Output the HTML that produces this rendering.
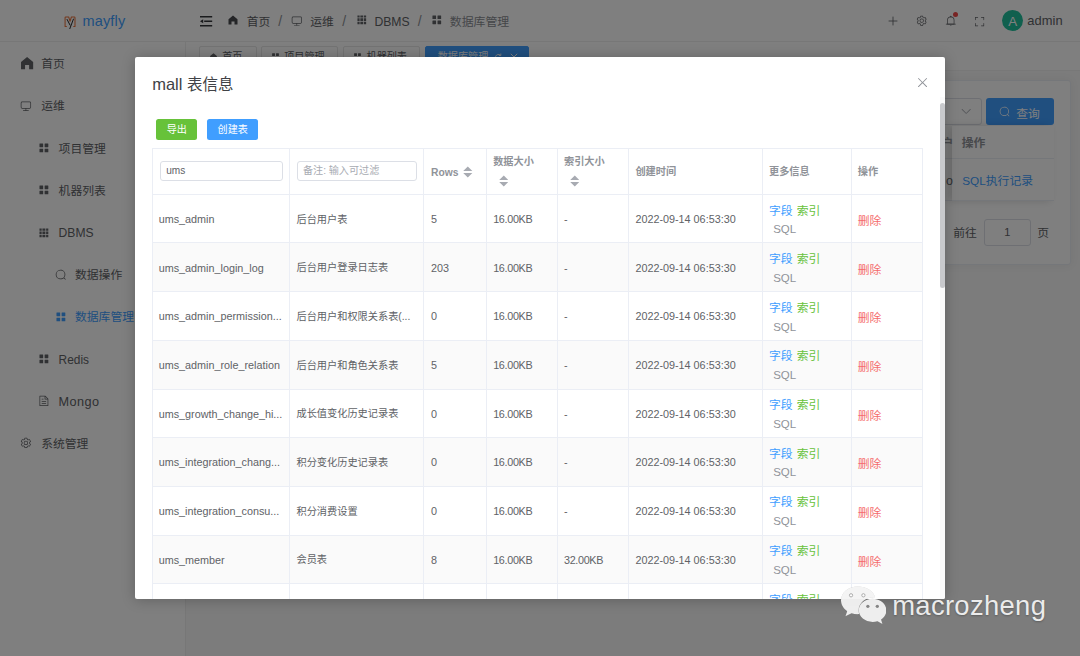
<!DOCTYPE html>
<html lang="zh-CN">
<head>
<meta charset="utf-8">
<title>mayfly - 数据库管理</title>
<style>
*{box-sizing:border-box;margin:0;padding:0}
html,body{width:1080px;height:656px;overflow:hidden;background:#f8f8f8}
body{font-family:"Liberation Sans","Noto Sans CJK SC",sans-serif;color:#303133;-webkit-font-smoothing:antialiased}
#app{position:relative;width:1080px;height:656px;overflow:hidden;background:#f8f8f8}
.abs{position:absolute}
svg{display:block}
/* ---------- header ---------- */
.header{position:absolute;left:0;top:0;width:1080px;height:42.2px;background:#fff;border-bottom:1px solid #eeeeee}
.logo{position:absolute;left:0;top:0;width:185.6px;height:42.2px}
.logo .txt{position:absolute;left:82.4px;top:11.7px;font-size:14.5px;letter-spacing:.18px;line-height:19px;color:#409eff}
.bc{position:absolute;top:0;height:42.2px;line-height:45.2px;font-size:11.8px;color:#606266;white-space:nowrap}
.bc.sep{color:#8d9095;font-size:14px;line-height:43.6px}
.bc.last{color:#8a8d93}
.hic{position:absolute}
.avatar{position:absolute;left:1002.1px;top:10px;width:21.2px;height:21.2px;border-radius:50%;background:#20c09c;color:#fff;font-size:13.4px;line-height:23.6px;text-align:center}
.uname{position:absolute;left:1027.2px;top:0;height:42.2px;line-height:42.6px;font-size:12.9px;letter-spacing:.12px;color:#606266}
/* ---------- sidebar ---------- */
.side{position:absolute;left:0;top:42.2px;width:185.6px;height:614px;background:#fff;border-right:1px solid #eeeeee}
.mi{position:absolute;left:0;width:185.6px;height:42.2px;line-height:45px;font-size:11.8px;color:#606266;white-space:nowrap}
.mi svg{position:absolute;top:50%}
.mi span{position:absolute;top:0}
.mi.act{color:#409eff}
/* ---------- tags ---------- */
.tags{position:absolute;left:186.4px;top:42.2px;width:894px;height:29px;background:#fff;border-bottom:1px solid #f0f0f0}
.tag{position:absolute;top:3.8px;height:22px;border:1px solid #e6e6e6;border-radius:2px;background:#fff;font-size:10.1px;line-height:20px;color:#606266;white-space:nowrap}
.tag.on{background:#409eff;border-color:#409eff;color:#fff}
/* ---------- card behind ---------- */
.card{position:absolute;left:195px;top:80.4px;width:876.3px;height:184.4px;background:#fff;border:1px solid #ebeef5;border-radius:3px;box-shadow:0 0 10px rgba(0,0,0,.06)}
/* ---------- overlay & modal ---------- */
.overlay{position:absolute;left:0;top:0;width:1080px;height:656px;background:rgba(0,0,0,.5)}
.modal{position:absolute;left:135px;top:56.8px;width:810.2px;height:542.2px;background:#fff;border-radius:2px;box-shadow:0 1px 14px rgba(0,0,0,.24);overflow:hidden}
.m{position:absolute;left:-135px;top:-56.8px;width:1080px;height:656px}
.title{position:absolute;left:152.2px;top:72.1px;font-size:15.5px;line-height:24px;color:#404246;white-space:nowrap}
.btn{position:absolute;top:119.4px;height:20.2px;border-radius:2.5px;color:#fff;font-size:10.1px;line-height:21.6px;text-align:center;white-space:nowrap}
.thumb{position:absolute;left:940.1px;top:102.8px;width:5.1px;height:185px;border-radius:3px;background:#c8c9cc}
/* table */
.tb{position:absolute;left:152.7px;top:148.2px;width:770px;height:460px;border-left:1px solid #ebeef5;border-top:1px solid #ebeef5}
.row{position:absolute;left:152.7px;width:770px;border-bottom:1px solid #ebeef5}
.row.s{background:#fafafa}
.vl{position:absolute;top:148.2px;width:1px;height:460px;background:#ebeef5}
.c{position:absolute;white-space:nowrap;font-size:10.8px;color:#606266;line-height:14px}
.c.zh{font-size:10.2px}
.th{position:absolute;white-space:nowrap;font-size:10.2px;font-weight:bold;color:#909399;line-height:14px}
.lk{position:absolute;white-space:nowrap;font-size:11.8px;line-height:16px}
.inp{position:absolute;top:161px;height:19.8px;border:1px solid #dcdfe6;border-radius:3px;background:#fff;font-size:10.1px;line-height:18.6px;color:#606266;padding-left:6px;white-space:nowrap}
/* watermark */
.wm{position:absolute;left:892.2px;top:585.5px;letter-spacing:.33px;font-family:"Liberation Sans","Noto Sans CJK SC",sans-serif;font-size:27.4px;line-height:40px;color:rgba(255,255,255,.88);white-space:nowrap;text-shadow:0 1px 2px rgba(0,0,0,.25)}
</style>
</head>
<body>
<div id="app">

<!-- HEADER -->
<div class="header">
  <div class="logo">
    <svg class="abs" style="left:64px;top:15.8px" width="12.4" height="14" viewBox="0 0 12.4 14"><path d="M2.800 10.500H1.080V1.700Q1.080 1 1.800 1H4.700L6.040 5.300 7.400 1H10.300Q11 1 11 1.700V10.500H9.300" fill="none" stroke="#e6713a" stroke-width="1.050" stroke-linejoin="round"/><path d="M2.900 3.100 6.200 9.400M9.600 2.700 5.700 13" fill="none" stroke="#26282b" stroke-width="1"/></svg>
    <div class="txt">mayfly</div>
  </div>
  <!-- fold icon -->
  <svg class="hic" style="left:200.4px;top:15.7px" width="12.2" height="11" viewBox="0 0 12.2 11"><path d="M0 .8h12.200M4.200 5.300h8M0 9.800h12.200" stroke="#34363a" stroke-width="1.600" fill="none"/><path d="M3.200 3.300 0 5.300 3.200 7.300z" fill="#34363a"/></svg>
  <!-- home -->
  <svg class="hic" style="left:227.2px;top:14.3px" width="12" height="12" viewBox="0 0 1024 1024"><path fill="#484a4e" d="M512 128 128 447.936V896h255.936V640H640v256h255.936V447.936z"/></svg>
  <div class="bc" style="left:246.8px">首页</div>
  <div class="bc sep" style="left:278.3px">/</div>
  <svg class="hic" style="left:291.4px;top:15.2px" width="11.6" height="11.6" viewBox="0 0 1024 1024"><path fill="#606266" d="M544 768v128h192a32 32 0 1 1 0 64H288a32 32 0 1 1 0-64h192V768H192A128 128 0 0 1 64 640V256a128 128 0 0 1 128-128h640a128 128 0 0 1 128 128v384a128 128 0 0 1-128 128zM192 192a64 64 0 0 0-64 64v384a64 64 0 0 0 64 64h640a64 64 0 0 0 64-64V256a64 64 0 0 0-64-64z"/></svg>
  <div class="bc" style="left:310.2px">运维</div>
  <div class="bc sep" style="left:342.3px">/</div>
  <svg class="hic" style="left:355.8px;top:14px" width="11.6" height="11.6" viewBox="0 0 1024 1024"><path fill="#606266" d="M640 384v256H384V384zm64 0h192v256H704zm-64 512H384V704h256zm64 0V704h192v192zm-64-768v192H384V128zm64 0h192v192H704zM320 384v256H128V384zm0 512H128V704h192zm0-768v192H128V128z"/></svg>
  <div class="bc" style="left:374.4px;font-size:12.2px">DBMS</div>
  <div class="bc sep" style="left:417.7px">/</div>
  <svg class="hic" style="left:430.6px;top:14px" width="11.6" height="11.6" viewBox="0 0 1024 1024"><path fill="#606266" d="M160 448a32 32 0 0 1-32-32V160.064a32 32 0 0 1 32-32h256a32 32 0 0 1 32 32V416a32 32 0 0 1-32 32zm448 0a32 32 0 0 1-32-32V160.064a32 32 0 0 1 32-32h255.936a32 32 0 0 1 32 32V416a32 32 0 0 1-32 32zM160 896a32 32 0 0 1-32-32V608a32 32 0 0 1 32-32h256a32 32 0 0 1 32 32v256a32 32 0 0 1-32 32zm448 0a32 32 0 0 1-32-32V608a32 32 0 0 1 32-32h255.936a32 32 0 0 1 32 32v256a32 32 0 0 1-32 32z"/></svg>
  <div class="bc last" style="left:449.8px;font-size:11.9px">数据库管理</div>

  <!-- right icons -->
  <svg class="hic" style="left:887.6px;top:16px" width="10" height="10" viewBox="0 0 10 10"><path d="M5 .6v8.8M.6 5h8.8" stroke="#606266" stroke-width=".85" fill="none"/></svg>
  <svg class="hic" style="left:915.8px;top:15.4px" width="11.4" height="11.4" viewBox="0 0 1024 1024"><path fill="#606266" d="M600.704 64a32 32 0 0 1 30.464 22.208l35.2 109.376c14.784 7.232 28.928 15.36 42.432 24.512l112.384-24.192a32 32 0 0 1 34.432 15.36L944.32 364.8a32 32 0 0 1-4.032 37.504l-77.12 85.12a357.12 357.12 0 0 1 0 49.024l77.12 85.248a32 32 0 0 1 4.032 37.504l-88.704 153.6a32 32 0 0 1-34.432 15.296L708.8 803.904c-13.44 9.088-27.648 17.28-42.368 24.512l-35.264 109.376A32 32 0 0 1 600.704 960H423.296a32 32 0 0 1-30.464-22.208L357.696 828.48a351.616 351.616 0 0 1-42.56-24.64l-112.32 24.256a32 32 0 0 1-34.432-15.36L79.68 659.2a32 32 0 0 1 4.032-37.504l77.12-85.248a357.12 357.12 0 0 1 0-48.896l-77.12-85.248A32 32 0 0 1 79.68 364.8l88.704-153.6a32 32 0 0 1 34.432-15.296l112.32 24.256c13.568-9.152 27.776-17.408 42.56-24.64l35.2-109.312A32 32 0 0 1 423.232 64H600.64zm-23.424 64H446.72l-36.352 113.088-24.512 11.968a294.113 294.113 0 0 0-34.816 20.096l-22.656 15.36-116.224-25.088-65.28 113.152 79.68 88.192-1.92 27.136a293.12 293.12 0 0 0 0 40.192l1.92 27.136-79.808 88.192 65.344 113.152 116.224-25.024 22.656 15.296a294.113 294.113 0 0 0 34.816 20.096l24.512 11.968L446.72 896h130.688l36.48-113.152 24.448-11.904a288.282 288.282 0 0 0 34.752-20.096l22.592-15.296 116.288 25.024 65.28-113.152-79.744-88.192 1.92-27.136a293.12 293.12 0 0 0 0-40.256l-1.92-27.136 79.808-88.128-65.344-113.152-116.288 24.96-22.592-15.232a287.616 287.616 0 0 0-34.752-20.096l-24.448-11.904L577.344 128zM512 320a192 192 0 1 1 0 384 192 192 0 0 1 0-384m0 64a128 128 0 1 0 0 256 128 128 0 0 0 0-256"/></svg>
  <svg class="hic" style="left:944.6px;top:15px" width="11.6" height="11.6" viewBox="0 0 1024 1024"><path fill="#606266" d="M512 64a64 64 0 0 1 64 64v64H448v-64a64 64 0 0 1 64-64"/><path fill="#606266" d="M256 768h512V448a256 256 0 1 0-512 0zm256-640a320 320 0 0 1 320 320v384H192V448a320 320 0 0 1 320-320"/><path fill="#606266" d="M96 768h832q32 0 32 32t-32 32H96q-32 0-32-32t32-32m352 128h128a64 64 0 0 1-128 0"/></svg>
  <div class="abs" style="left:953px;top:12.2px;width:5px;height:5px;border-radius:50%;background:#f04848"></div>
  <svg class="hic" style="left:973.6px;top:15.6px" width="11.2" height="11.2" viewBox="0 0 1024 1024"><path fill="#606266" d="m160 96.064 192 .192a32 32 0 0 1 0 64l-192-.192V352a32 32 0 0 1-64 0V96h64zm0 831.872V928H96V672a32 32 0 1 1 64 0v191.936l192-.192a32 32 0 1 1 0 64zM864 96.064V96h64v256a32 32 0 1 1-64 0V160.064l-192 .192a32 32 0 1 1 0-64l192-.192zm0 831.872-192-.192a32 32 0 0 1 0-64l192 .192V672a32 32 0 1 1 64 0v256h-64z"/></svg>
  <div class="avatar">A</div>
  <div class="uname">admin</div>
</div>

<!-- SIDEBAR -->
<div class="side">
<div class="mi" style="top:0.00px"><svg style="left:18.6px;margin-top:-8.30px" width="16.2" height="16.2" viewBox="0 0 1024 1024"><path fill="#606266" d="M512 128 128 447.936V896h255.936V640H640v256h255.936V447.936z"/></svg><span style="left:41.2px">首页</span></div>
<div class="mi" style="top:42.19px"><svg style="left:20.400000000000002px;margin-top:-5.50px" width="11.8" height="11.8" viewBox="0 0 1024 1024"><path fill="#606266" d="M544 768v128h192a32 32 0 1 1 0 64H288a32 32 0 1 1 0-64h192V768H192A128 128 0 0 1 64 640V256a128 128 0 0 1 128-128h640a128 128 0 0 1 128 128v384a128 128 0 0 1-128 128zM192 192a64 64 0 0 0-64 64v384a64 64 0 0 0 64 64h640a64 64 0 0 0 64-64V256a64 64 0 0 0-64-64z"/></svg><span style="left:41.2px">运维</span></div>
<div class="mi" style="top:84.38px"><svg style="left:38.4px;margin-top:-5.50px" width="11.8" height="11.8" viewBox="0 0 1024 1024"><path fill="#606266" d="M160 448a32 32 0 0 1-32-32V160.064a32 32 0 0 1 32-32h256a32 32 0 0 1 32 32V416a32 32 0 0 1-32 32zm448 0a32 32 0 0 1-32-32V160.064a32 32 0 0 1 32-32h255.936a32 32 0 0 1 32 32V416a32 32 0 0 1-32 32zM160 896a32 32 0 0 1-32-32V608a32 32 0 0 1 32-32h256a32 32 0 0 1 32 32v256a32 32 0 0 1-32 32zm448 0a32 32 0 0 1-32-32V608a32 32 0 0 1 32-32h255.936a32 32 0 0 1 32 32v256a32 32 0 0 1-32 32z"/></svg><span style="left:58.6px">项目管理</span></div>
<div class="mi" style="top:126.57px"><svg style="left:38.4px;margin-top:-5.50px" width="11.8" height="11.8" viewBox="0 0 1024 1024"><path fill="#606266" d="M160 448a32 32 0 0 1-32-32V160.064a32 32 0 0 1 32-32h256a32 32 0 0 1 32 32V416a32 32 0 0 1-32 32zm448 0a32 32 0 0 1-32-32V160.064a32 32 0 0 1 32-32h255.936a32 32 0 0 1 32 32V416a32 32 0 0 1-32 32zM160 896a32 32 0 0 1-32-32V608a32 32 0 0 1 32-32h256a32 32 0 0 1 32 32v256a32 32 0 0 1-32 32zm448 0a32 32 0 0 1-32-32V608a32 32 0 0 1 32-32h255.936a32 32 0 0 1 32 32v256a32 32 0 0 1-32 32z"/></svg><span style="left:58.6px">机器列表</span></div>
<div class="mi" style="top:168.76px"><svg style="left:38.4px;margin-top:-5.50px" width="11.8" height="11.8" viewBox="0 0 1024 1024"><path fill="#606266" d="M640 384v256H384V384zm64 0h192v256H704zm-64 512H384V704h256zm64 0V704h192v192zm-64-768v192H384V128zm64 0h192v192H704zM320 384v256H128V384zm0 512H128V704h192zm0-768v192H128V128z"/></svg><span style="left:58.6px;font-size:12.1px">DBMS</span></div>
<div class="mi" style="top:210.95px"><svg style="left:55.0px;margin-top:-5.50px" width="11.8" height="11.8" viewBox="0 0 1024 1024"><path fill="#606266" d="m795.904 750.72 124.992 124.928a32 32 0 0 1-45.248 45.248L750.656 795.904a416 416 0 1 1 45.248-45.248zM480 832a352 352 0 1 0 0-704 352 352 0 0 0 0 704"/></svg><span style="left:75px">数据操作</span></div>
<div class="mi act" style="top:253.14px"><svg style="left:55.0px;margin-top:-5.50px" width="11.8" height="11.8" viewBox="0 0 1024 1024"><path fill="#409eff" d="M160 448a32 32 0 0 1-32-32V160.064a32 32 0 0 1 32-32h256a32 32 0 0 1 32 32V416a32 32 0 0 1-32 32zm448 0a32 32 0 0 1-32-32V160.064a32 32 0 0 1 32-32h255.936a32 32 0 0 1 32 32V416a32 32 0 0 1-32 32zM160 896a32 32 0 0 1-32-32V608a32 32 0 0 1 32-32h256a32 32 0 0 1 32 32v256a32 32 0 0 1-32 32zm448 0a32 32 0 0 1-32-32V608a32 32 0 0 1 32-32h255.936a32 32 0 0 1 32 32v256a32 32 0 0 1-32 32z"/></svg><span style="left:75px">数据库管理</span></div>
<div class="mi" style="top:295.33px"><svg style="left:38.4px;margin-top:-5.50px" width="11.8" height="11.8" viewBox="0 0 1024 1024"><path fill="#606266" d="M160 448a32 32 0 0 1-32-32V160.064a32 32 0 0 1 32-32h256a32 32 0 0 1 32 32V416a32 32 0 0 1-32 32zm448 0a32 32 0 0 1-32-32V160.064a32 32 0 0 1 32-32h255.936a32 32 0 0 1 32 32V416a32 32 0 0 1-32 32zM160 896a32 32 0 0 1-32-32V608a32 32 0 0 1 32-32h256a32 32 0 0 1 32 32v256a32 32 0 0 1-32 32zm448 0a32 32 0 0 1-32-32V608a32 32 0 0 1 32-32h255.936a32 32 0 0 1 32 32v256a32 32 0 0 1-32 32z"/></svg><span style="left:58.6px;font-size:11.9px">Redis</span></div>
<div class="mi" style="top:337.52px"><svg style="left:38.4px;margin-top:-5.50px" width="11.8" height="11.8" viewBox="0 0 1024 1024"><path fill="#606266" d="M832 384H576V128H192v768h640zm-26.496-64L640 154.496V320zM160 64h480l256 256v608a32 32 0 0 1-32 32H160a32 32 0 0 1-32-32V96a32 32 0 0 1 32-32m160 448h384v64H320zm0-192h160v64H320zm0 384h384v64H320z"/></svg><span style="left:58.6px;font-size:12.7px;letter-spacing:.4px">Mongo</span></div>
<div class="mi" style="top:379.71px"><svg style="left:20.400000000000002px;margin-top:-5.50px" width="11.8" height="11.8" viewBox="0 0 1024 1024"><path fill="#606266" d="M600.704 64a32 32 0 0 1 30.464 22.208l35.2 109.376c14.784 7.232 28.928 15.36 42.432 24.512l112.384-24.192a32 32 0 0 1 34.432 15.36L944.32 364.8a32 32 0 0 1-4.032 37.504l-77.12 85.12a357.12 357.12 0 0 1 0 49.024l77.12 85.248a32 32 0 0 1 4.032 37.504l-88.704 153.6a32 32 0 0 1-34.432 15.296L708.8 803.904c-13.44 9.088-27.648 17.28-42.368 24.512l-35.264 109.376A32 32 0 0 1 600.704 960H423.296a32 32 0 0 1-30.464-22.208L357.696 828.48a351.616 351.616 0 0 1-42.56-24.64l-112.32 24.256a32 32 0 0 1-34.432-15.36L79.68 659.2a32 32 0 0 1 4.032-37.504l77.12-85.248a357.12 357.12 0 0 1 0-48.896l-77.12-85.248A32 32 0 0 1 79.68 364.8l88.704-153.6a32 32 0 0 1 34.432-15.296l112.32 24.256c13.568-9.152 27.776-17.408 42.56-24.64l35.2-109.312A32 32 0 0 1 423.232 64H600.64zm-23.424 64H446.72l-36.352 113.088-24.512 11.968a294.113 294.113 0 0 0-34.816 20.096l-22.656 15.36-116.224-25.088-65.28 113.152 79.68 88.192-1.92 27.136a293.12 293.12 0 0 0 0 40.192l1.92 27.136-79.808 88.192 65.344 113.152 116.224-25.024 22.656 15.296a294.113 294.113 0 0 0 34.816 20.096l24.512 11.968L446.72 896h130.688l36.48-113.152 24.448-11.904a288.282 288.282 0 0 0 34.752-20.096l22.592-15.296 116.288 25.024 65.28-113.152-79.744-88.192 1.92-27.136a293.12 293.12 0 0 0 0-40.256l-1.92-27.136 79.808-88.128-65.344-113.152-116.288 24.96-22.592-15.232a287.616 287.616 0 0 0-34.752-20.096l-24.448-11.904L577.344 128zM512 320a192 192 0 1 1 0 384 192 192 0 0 1 0-384m0 64a128 128 0 1 0 0 256 128 128 0 0 0 0-256"/></svg><span style="left:41.2px">系统管理</span></div>
</div>

<!-- TAGS -->
<div class="tags">
<div class="tag" style="left:12.8px;width:57.5px"><svg class="abs" style="left:9px;top:5.4px" width="9" height="9" viewBox="0 0 1024 1024"><path fill="#606266" d="M512 128 128 447.936V896h255.936V640H640v256h255.936V447.936z"/></svg><span class="abs" style="left:22px">首页</span></div>
<div class="tag" style="left:74.9px;width:77px"><svg class="abs" style="left:9px;top:5.4px" width="9" height="9" viewBox="0 0 1024 1024"><path fill="#606266" d="M160 448a32 32 0 0 1-32-32V160.064a32 32 0 0 1 32-32h256a32 32 0 0 1 32 32V416a32 32 0 0 1-32 32zm448 0a32 32 0 0 1-32-32V160.064a32 32 0 0 1 32-32h255.936a32 32 0 0 1 32 32V416a32 32 0 0 1-32 32zM160 896a32 32 0 0 1-32-32V608a32 32 0 0 1 32-32h256a32 32 0 0 1 32 32v256a32 32 0 0 1-32 32zm448 0a32 32 0 0 1-32-32V608a32 32 0 0 1 32-32h255.936a32 32 0 0 1 32 32v256a32 32 0 0 1-32 32z"/></svg><span class="abs" style="left:22px">项目管理</span></div>
<div class="tag" style="left:156.6px;width:77.3px"><svg class="abs" style="left:9px;top:5.4px" width="9" height="9" viewBox="0 0 1024 1024"><path fill="#606266" d="M160 448a32 32 0 0 1-32-32V160.064a32 32 0 0 1 32-32h256a32 32 0 0 1 32 32V416a32 32 0 0 1-32 32zm448 0a32 32 0 0 1-32-32V160.064a32 32 0 0 1 32-32h255.936a32 32 0 0 1 32 32V416a32 32 0 0 1-32 32zM160 896a32 32 0 0 1-32-32V608a32 32 0 0 1 32-32h256a32 32 0 0 1 32 32v256a32 32 0 0 1-32 32zm448 0a32 32 0 0 1-32-32V608a32 32 0 0 1 32-32h255.936a32 32 0 0 1 32 32v256a32 32 0 0 1-32 32z"/></svg><span class="abs" style="left:22.6px">机器列表</span></div>
<div class="tag on" style="left:238.8px;width:104px"><span class="abs" style="left:11.6px">数据库管理</span>
<svg class="abs" style="left:68.2px;top:5.6px" width="9" height="9" viewBox="0 0 10 10"><path d="M8.4 5a3.4 3.4 0 1 1-1.2-2.6" fill="none" stroke="#fff" stroke-width="1"/><path d="M7.6.6v2.2H5.4" fill="none" stroke="#fff" stroke-width="1"/></svg>
<svg class="abs" style="left:83.8px;top:6px" width="8" height="8" viewBox="0 0 8 8"><path d="M.8.8l6.4 6.4M7.2.8.8 7.2" stroke="#fff" stroke-width="1" fill="none"/></svg>
</div>
</div>

<!-- CARD BEHIND -->
<div class="card"></div>

<div class="abs" style="left:900px;top:98.2px;width:82px;height:27px;border:1px solid #dcdfe6;border-radius:3px;background:#fff"><svg class="abs" style="left:58.6px;top:6px" width="12.4" height="12.4" viewBox="0 0 1024 1024"><path fill="#a8abb2" d="M831.872 340.864 512 652.672 192.128 340.864a30.592 30.592 0 0 0-42.752 0 29.12 29.12 0 0 0 0 41.6L489.664 714.24a32 32 0 0 0 44.672 0l340.288-331.712a29.12 29.12 0 0 0 0-41.728 30.592 30.592 0 0 0-42.752 0z"/></svg></div>
<div class="abs" style="left:986.1px;top:98.2px;width:67.7px;height:27px;border-radius:3px;background:#409eff;color:#fff;font-size:11.8px;line-height:27.6px"><svg class="abs" style="left:13.4px;top:8px" width="11.4" height="11.4" viewBox="0 0 1024 1024"><path fill="#fff" d="m795.904 750.72 124.992 124.928a32 32 0 0 1-45.248 45.248L750.656 795.904a416 416 0 1 1 45.248-45.248zM480 832a352 352 0 1 0 0-704 352 352 0 0 0 0 704"/></svg><span class="abs" style="left:30.2px;top:2.7px">查询</span></div>
<div class="abs" style="left:880px;top:126px;width:174px;height:33px;border-bottom:1px solid #ebeef5"></div>
<div class="abs" style="left:880px;top:159px;width:174px;height:42px;border-bottom:1px solid #ebeef5"></div>
<div class="abs" style="left:952px;top:126px;width:101.8px;height:75px;background:#fff;box-shadow:-4px 0 8px rgba(0,0,0,.15)"></div>
<div class="abs" style="left:952px;top:158.2px;width:101.8px;height:1px;background:#ebeef5"></div>
<div class="abs" style="left:952px;top:200.2px;width:101.8px;height:1px;background:#ebeef5"></div>
<div class="abs" style="left:941.4px;top:133.8px;font-size:11.8px;line-height:18px;font-weight:bold;color:#909399">户</div>
<div class="abs" style="left:961.8px;top:133.8px;font-size:11.8px;line-height:18px;font-weight:bold;color:#909399">操作</div>
<div class="abs" style="left:946px;top:171.6px;font-size:12.4px;line-height:18px;color:#606266">o</div>
<div class="abs" style="left:962.2px;top:171.6px;font-size:11.8px;line-height:18px;color:#409eff;white-space:nowrap">SQL执行记录</div>
<div class="abs" style="left:953.2px;top:224px;font-size:11.8px;line-height:18px;color:#606266;white-space:nowrap">前往</div>
<div class="abs" style="left:983.5px;top:219.4px;width:47.5px;height:26.6px;border:1px solid #dcdfe6;border-radius:3px;background:#fff;text-align:center;font-size:11px;line-height:25px;color:#606266">1</div>
<div class="abs" style="left:1037.2px;top:224px;font-size:11.8px;line-height:18px;color:#606266">页</div>


<div class="overlay"></div>

<!-- MODAL -->
<div class="modal"><div class="m">
<div class="title"><span style="font-size:16.5px">mall </span>表信息</div>
<svg class="abs" style="left:914.8px;top:75.1px" width="15.1" height="15.1" viewBox="0 0 1024 1024"><path fill="#909399" d="M764.288 214.592 512 466.88 259.712 214.592a31.936 31.936 0 0 0-45.12 45.12L466.752 512 214.528 764.224a31.936 31.936 0 1 0 45.12 45.184L512 557.184l252.288 252.288a31.936 31.936 0 0 0 45.12-45.12L557.12 512.064l252.288-252.352a31.936 31.936 0 1 0-45.12-45.184z"/></svg>
<div class="btn" style="left:156.3px;width:40.9px;background:#67c23a">导出</div>
<div class="btn" style="left:207.3px;width:50.8px;background:#409eff">创建表</div>
<div class="abs" style="left:152.7px;top:148.2px;width:769.7px;height:1px;background:#ebeef5"></div>
<div class="abs" style="left:152.7px;top:193.7px;width:769.7px;height:1px;background:#ebeef5"></div>
<div class="abs" style="left:152.7px;top:194.70px;width:769.7px;height:47.72px;background:#fff"></div>
<div class="abs" style="left:152.7px;top:242.42px;width:769.7px;height:1px;background:#ebeef5"></div>
<div class="abs" style="left:152.7px;top:243.42px;width:769.7px;height:47.72px;background:#fafafa"></div>
<div class="abs" style="left:152.7px;top:291.14px;width:769.7px;height:1px;background:#ebeef5"></div>
<div class="abs" style="left:152.7px;top:292.14px;width:769.7px;height:47.72px;background:#fff"></div>
<div class="abs" style="left:152.7px;top:339.86px;width:769.7px;height:1px;background:#ebeef5"></div>
<div class="abs" style="left:152.7px;top:340.86px;width:769.7px;height:47.72px;background:#fafafa"></div>
<div class="abs" style="left:152.7px;top:388.58px;width:769.7px;height:1px;background:#ebeef5"></div>
<div class="abs" style="left:152.7px;top:389.58px;width:769.7px;height:47.72px;background:#fff"></div>
<div class="abs" style="left:152.7px;top:437.30px;width:769.7px;height:1px;background:#ebeef5"></div>
<div class="abs" style="left:152.7px;top:438.30px;width:769.7px;height:47.72px;background:#fafafa"></div>
<div class="abs" style="left:152.7px;top:486.02px;width:769.7px;height:1px;background:#ebeef5"></div>
<div class="abs" style="left:152.7px;top:487.02px;width:769.7px;height:47.72px;background:#fff"></div>
<div class="abs" style="left:152.7px;top:534.74px;width:769.7px;height:1px;background:#ebeef5"></div>
<div class="abs" style="left:152.7px;top:535.74px;width:769.7px;height:47.72px;background:#fafafa"></div>
<div class="abs" style="left:152.7px;top:583.46px;width:769.7px;height:1px;background:#ebeef5"></div>
<div class="abs" style="left:152.7px;top:584.46px;width:769.7px;height:47.72px;background:#fff"></div>
<div class="abs" style="left:152.7px;top:632.18px;width:769.7px;height:1px;background:#ebeef5"></div>
<div class="vl" style="left:152.2px"></div>
<div class="vl" style="left:289.2px"></div>
<div class="vl" style="left:423.0px"></div>
<div class="vl" style="left:486.0px"></div>
<div class="vl" style="left:557.0px"></div>
<div class="vl" style="left:628.0px"></div>
<div class="vl" style="left:762.0px"></div>
<div class="vl" style="left:850.5px"></div>
<div class="vl" style="left:921.9px"></div>
<div class="inp" style="left:160px;width:122.8px;padding-left:5.2px">ums</div>
<div class="inp" style="left:297.2px;width:119.8px;color:#a8abb2;padding-left:4.8px">备注: 输入可过滤</div>
<div class="th"  style="font-size:10.3px;margin-top:1.1px;left:431px;top:164.80px">Rows</div>
<svg class="abs" style="left:463.40px;top:165.70px" width="9.6" height="12" viewBox="0 0 8 12" preserveAspectRatio="none"><path d="M4 .5 7.8 5.100H.2zM4 11.500 7.800 6.900H.2z" fill="#a8abb2"/></svg>
<div class="th" style="left:493.2px;top:154.60px">数据大小</div>
<svg class="abs" style="left:498.90px;top:174.80px" width="9.6" height="12" viewBox="0 0 8 12" preserveAspectRatio="none"><path d="M4 .5 7.8 5.100H.2zM4 11.500 7.800 6.900H.2z" fill="#a8abb2"/></svg>
<div class="th" style="left:564px;top:154.60px">索引大小</div>
<svg class="abs" style="left:569.80px;top:174.80px" width="9.6" height="12" viewBox="0 0 8 12" preserveAspectRatio="none"><path d="M4 .5 7.8 5.100H.2zM4 11.500 7.800 6.900H.2z" fill="#a8abb2"/></svg>
<div class="th" style="left:635.4px;top:164.80px">创建时间</div>
<div class="th" style="left:769px;top:164.80px">更多信息</div>
<div class="th" style="left:857.8px;top:164.80px">操作</div>
<div class="c" style="left:158.7px;top:212px">ums_admin</div>
<div class="c zh" style="left:296.5px;top:213px">后台用户表</div>
<div class="c" style="left:431px;top:212px">5</div>
<div class="c" style="letter-spacing:-.33px;left:493.2px;top:212px">16.00KB</div>
<div class="c" style="letter-spacing:-.33px;left:564px;top:212px">-</div>
<div class="c" style="left:635.4px;top:212px">2022-09-14 06:53:30</div>
<div class="lk" style="left:769px;top:203px;color:#409eff">字段</div>
<div class="lk" style="left:796.8px;top:203px;color:#67c23a">索引</div>
<div class="lk" style="left:773.2px;top:221px;color:#909399;font-size:11.5px">SQL</div>
<div class="lk" style="left:857.8px;top:213px;color:#f56c6c">删除</div>
<div class="c" style="left:158.7px;top:261px">ums_admin_login_log</div>
<div class="c zh" style="left:296.5px;top:261px">后台用户登录日志表</div>
<div class="c" style="left:431px;top:261px">203</div>
<div class="c" style="letter-spacing:-.33px;left:493.2px;top:261px">16.00KB</div>
<div class="c" style="letter-spacing:-.33px;left:564px;top:261px">-</div>
<div class="c" style="left:635.4px;top:261px">2022-09-14 06:53:30</div>
<div class="lk" style="left:769px;top:251px;color:#409eff">字段</div>
<div class="lk" style="left:796.8px;top:251px;color:#67c23a">索引</div>
<div class="lk" style="left:773.2px;top:270px;color:#909399;font-size:11.5px">SQL</div>
<div class="lk" style="left:857.8px;top:262px;color:#f56c6c">删除</div>
<div class="c" style="left:158.7px;top:309px">ums_admin_permission...</div>
<div class="c zh" style="left:296.5px;top:310px">后台用户和权限关系表(...</div>
<div class="c" style="left:431px;top:309px">0</div>
<div class="c" style="letter-spacing:-.33px;left:493.2px;top:309px">16.00KB</div>
<div class="c" style="letter-spacing:-.33px;left:564px;top:309px">-</div>
<div class="c" style="left:635.4px;top:309px">2022-09-14 06:53:30</div>
<div class="lk" style="left:769px;top:300px;color:#409eff">字段</div>
<div class="lk" style="left:796.8px;top:300px;color:#67c23a">索引</div>
<div class="lk" style="left:773.2px;top:319px;color:#909399;font-size:11.5px">SQL</div>
<div class="lk" style="left:857.8px;top:310px;color:#f56c6c">删除</div>
<div class="c" style="left:158.7px;top:358px">ums_admin_role_relation</div>
<div class="c zh" style="left:296.5px;top:359px">后台用户和角色关系表</div>
<div class="c" style="left:431px;top:358px">5</div>
<div class="c" style="letter-spacing:-.33px;left:493.2px;top:358px">16.00KB</div>
<div class="c" style="letter-spacing:-.33px;left:564px;top:358px">-</div>
<div class="c" style="left:635.4px;top:358px">2022-09-14 06:53:30</div>
<div class="lk" style="left:769px;top:348px;color:#409eff">字段</div>
<div class="lk" style="left:796.8px;top:348px;color:#67c23a">索引</div>
<div class="lk" style="left:773.2px;top:367px;color:#909399;font-size:11.5px">SQL</div>
<div class="lk" style="left:857.8px;top:359px;color:#f56c6c">删除</div>
<div class="c" style="left:158.7px;top:407px">ums_growth_change_hi...</div>
<div class="c zh" style="left:296.5px;top:407px">成长值变化历史记录表</div>
<div class="c" style="left:431px;top:407px">0</div>
<div class="c" style="letter-spacing:-.33px;left:493.2px;top:407px">16.00KB</div>
<div class="c" style="letter-spacing:-.33px;left:564px;top:407px">-</div>
<div class="c" style="left:635.4px;top:407px">2022-09-14 06:53:30</div>
<div class="lk" style="left:769px;top:397px;color:#409eff">字段</div>
<div class="lk" style="left:796.8px;top:397px;color:#67c23a">索引</div>
<div class="lk" style="left:773.2px;top:416px;color:#909399;font-size:11.5px">SQL</div>
<div class="lk" style="left:857.8px;top:408px;color:#f56c6c">删除</div>
<div class="c" style="left:158.7px;top:455px">ums_integration_chang...</div>
<div class="c zh" style="left:296.5px;top:456px">积分变化历史记录表</div>
<div class="c" style="left:431px;top:455px">0</div>
<div class="c" style="letter-spacing:-.33px;left:493.2px;top:455px">16.00KB</div>
<div class="c" style="letter-spacing:-.33px;left:564px;top:455px">-</div>
<div class="c" style="left:635.4px;top:455px">2022-09-14 06:53:30</div>
<div class="lk" style="left:769px;top:446px;color:#409eff">字段</div>
<div class="lk" style="left:796.8px;top:446px;color:#67c23a">索引</div>
<div class="lk" style="left:773.2px;top:464px;color:#909399;font-size:11.5px">SQL</div>
<div class="lk" style="left:857.8px;top:456px;color:#f56c6c">删除</div>
<div class="c" style="left:158.7px;top:504px">ums_integration_consu...</div>
<div class="c zh" style="left:296.5px;top:505px">积分消费设置</div>
<div class="c" style="left:431px;top:504px">0</div>
<div class="c" style="letter-spacing:-.33px;left:493.2px;top:504px">16.00KB</div>
<div class="c" style="letter-spacing:-.33px;left:564px;top:504px">-</div>
<div class="c" style="left:635.4px;top:504px">2022-09-14 06:53:30</div>
<div class="lk" style="left:769px;top:494px;color:#409eff">字段</div>
<div class="lk" style="left:796.8px;top:494px;color:#67c23a">索引</div>
<div class="lk" style="left:773.2px;top:513px;color:#909399;font-size:11.5px">SQL</div>
<div class="lk" style="left:857.8px;top:505px;color:#f56c6c">删除</div>
<div class="c" style="left:158.7px;top:553px">ums_member</div>
<div class="c zh" style="left:296.5px;top:553px">会员表</div>
<div class="c" style="left:431px;top:553px">8</div>
<div class="c" style="letter-spacing:-.33px;left:493.2px;top:553px">16.00KB</div>
<div class="c" style="letter-spacing:-.33px;left:564px;top:553px">32.00KB</div>
<div class="c" style="left:635.4px;top:553px">2022-09-14 06:53:30</div>
<div class="lk" style="left:769px;top:543px;color:#409eff">字段</div>
<div class="lk" style="left:796.8px;top:543px;color:#67c23a">索引</div>
<div class="lk" style="left:773.2px;top:562px;color:#909399;font-size:11.5px">SQL</div>
<div class="lk" style="left:857.8px;top:554px;color:#f56c6c">删除</div>
<div class="c" style="left:158.7px;top:601px">ums_member_level</div>
<div class="c zh" style="left:296.5px;top:602px">会员等级表</div>
<div class="c" style="left:431px;top:601px">4</div>
<div class="c" style="letter-spacing:-.33px;left:493.2px;top:601px">16.00KB</div>
<div class="c" style="letter-spacing:-.33px;left:564px;top:601px">-</div>
<div class="c" style="left:635.4px;top:601px">2022-09-14 06:53:30</div>
<div class="lk" style="left:769px;top:592px;color:#409eff">字段</div>
<div class="lk" style="left:796.8px;top:592px;color:#67c23a">索引</div>
<div class="lk" style="left:773.2px;top:610px;color:#909399;font-size:11.5px">SQL</div>
<div class="lk" style="left:857.8px;top:602px;color:#f56c6c">删除</div>
<div class="abs" style="left:939.8px;top:97px;width:5.6px;height:503px;background:#fbfbfb"></div>
<div class="thumb"></div>
</div></div>

<!-- WATERMARK -->
<svg class="abs" style="left:841px;top:585.6px;filter:drop-shadow(0 0 .7px rgba(0,0,0,.22))" width="45.4" height="38.9" viewBox="0 0 47 39.4">
<g fill="rgba(246,246,246,.94)">
<path d="M17.4 0C7.8 0 0 6.4 0 14.4c0 4.500 2.500 8.500 6.400 11.200L4.600 31l6.300-3.300c2 .6 4.100 1 6.500 1 .5 0 1 0 1.500-.1-.4-1.300-.6-2.600-.6-4 0-7.400 7.100-13.400 15.800-13.400.4 0 .9 0 1.300.1C33.800 4.800 26.300 0 17.400 0z"/>
<path d="M47 24.800c0-6.600-6.400-12-14.300-12s-14.300 5.400-14.300 12 6.400 12 14.300 12c1.800 0 3.500-.3 5.100-.8l5.100 2.800-1.400-4.500c3.400-2.200 5.500-5.600 5.500-9.500z"/>
</g>
<g fill="#fdfdfd" stroke="#a9a9a9" stroke-width="1"><circle cx="10.4" cy="9.2" r="1.700"/><circle cx="23.200" cy="9.200" r="1.700"/></g>
<g fill="#858585"><circle cx="27.800" cy="20.600" r="1.700"/><circle cx="37.600" cy="20.600" r="1.700"/></g>
</svg>
<div class="wm">macrozheng</div>

</div>
</body>
</html>
